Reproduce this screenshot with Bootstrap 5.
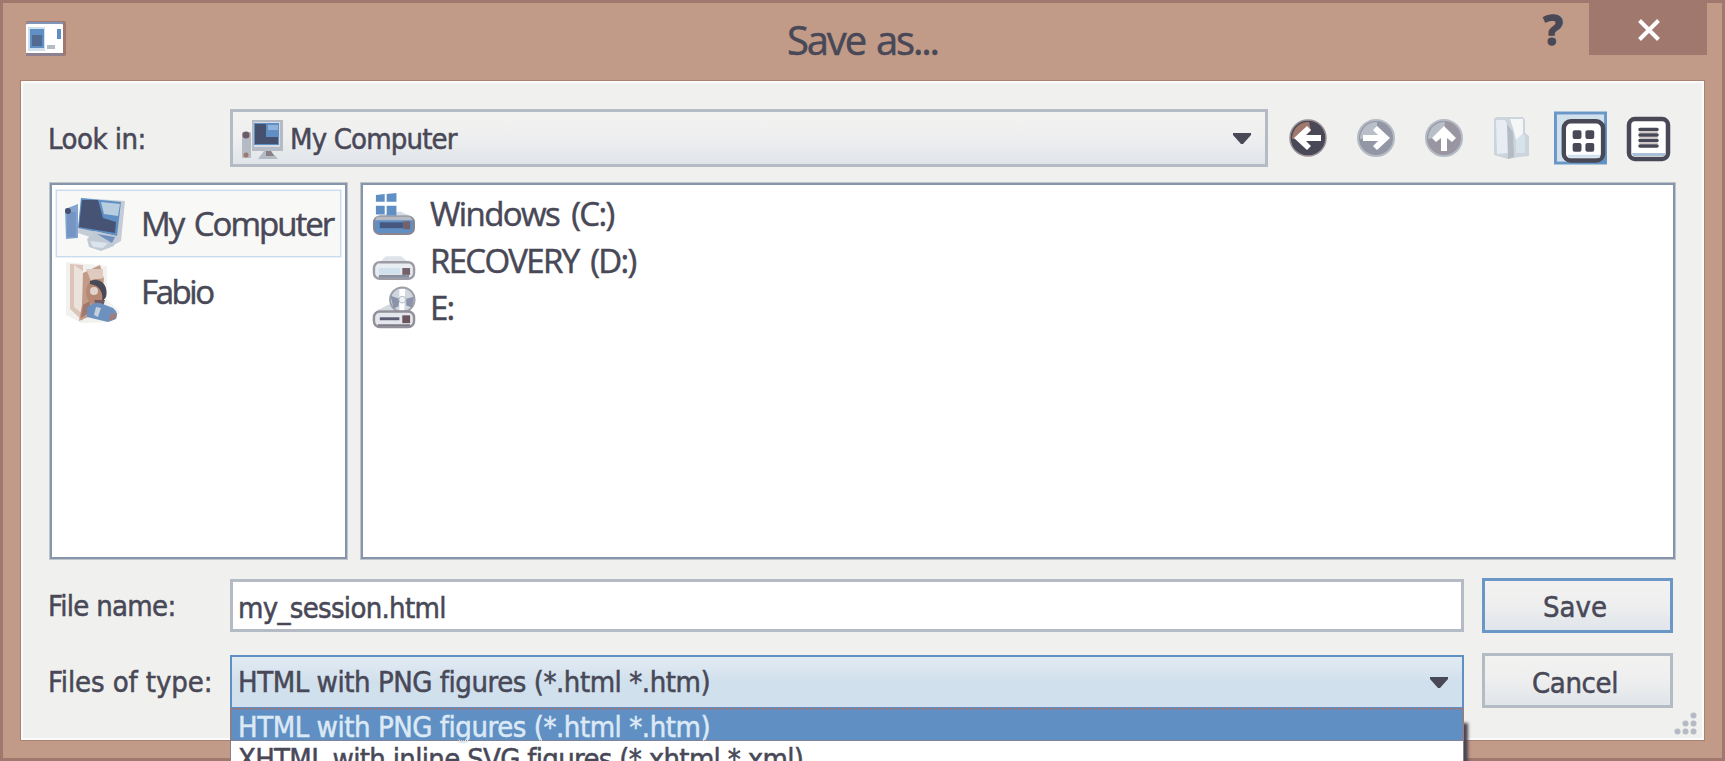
<!DOCTYPE html>
<html lang="en">
<head>
<meta charset="utf-8">
<title>Save as...</title>
<link href="https://cdn.jsdelivr.net/npm/bootstrap@5.3.0/dist/css/bootstrap.min.css" rel="stylesheet">
<style>
:root{--tan:#c19b87;--brown:#a0786d;--ink:#484857;--blue:#5f8fc3;--pale:#d1e0ed;--grey:#b4bbc4;--face:#f0f0ee}
html,body{height:100%;overflow:hidden}
body{font-family:"DejaVu Sans Condensed","DejaVu Sans",sans-serif;font-size:29px;line-height:1;color:var(--ink);-webkit-text-stroke:.5px currentColor}
.window{height:761px;background:var(--tan);border:3px solid var(--brown);padding:0 18px}
.titlebar{height:78px}
.app-icon{margin:17px 0 0 4px}
.window-title{font:40px/74px "Open Sans",sans-serif;letter-spacing:-2.2px;word-spacing:3px;text-align:center}
.help{font:700 41px/52px "Noto Sans",sans-serif;width:26px;text-align:center;margin-right:23px;-webkit-text-stroke:1.4px currentColor}
.close-btn{width:118px;height:52px;background:var(--brown);border:0;border-radius:0;padding:2px 0 0 1px;margin-right:-3px}
.panel{height:659px;background:var(--face);border:2px solid #fbfbfb;outline:1px solid #a98272;padding:26px 26px 0 26px}
.window-title,.tools,.lbl,.item{white-space:nowrap}
.lbl{width:182px;flex:none;margin-left:-1px;padding-top:2px}
.field{border:3px solid var(--grey);padding:0 5px;flex:none;white-space:nowrap}
.shade{background:linear-gradient(#f2f2f1,#efefef 45%,#e0e5ea)}
.look{width:1038px;height:58px}
.caret-svg{margin-right:8px}
.tools{margin-left:21px}
.tool{background:none;border:0;padding:0;display:flex}
.pane{height:376px;background:#fff;border:2px solid #8795aa;outline:1px solid #bfc4cb;outline-offset:0}
.places{width:297px;padding:5px 4px}
.files{width:1314px;padding:5px 8px}
.item{font-family:"Open Sans",sans-serif;font-size:33px}
.place{height:67px}
.place.current{background:#f8f8f7;border:1px solid #c9dced;outline:1px solid #eaf0f5}
.drive{height:47px}
.name-field{width:1234px;height:53px;background:#fff;border-width:3px}
.type-field{width:1234px;height:53px;background:linear-gradient(#e2ebf3,var(--pale) 50%);border:3px solid var(--blue);border-width:2px 2px 1px}
.push{width:191px;border:3px solid var(--grey);border-radius:0;font-size:29px;line-height:1;color:var(--ink);padding:3px 5px 0 0;-webkit-text-stroke:.5px currentColor}
.push.primary{border-color:#6b97c8}
.popup{left:0;top:53px;width:1234px;height:53px;overflow:hidden;background:#fff;border:1px solid #8b8088;border-top:0;border-bottom:0;box-shadow:5px 14px 3px -1px #4b4653;z-index:3}
.option{height:33px;padding:2px 7px 0;line-height:33px;white-space:nowrap}
.option.chosen{background:var(--blue);color:#dce9f5;outline:1px dotted #a0786d;outline-offset:-1px;border-top:2px dotted #96788a;line-height:31px}
.grip{right:5px;bottom:3px}
</style>
<script src="https://cdn.jsdelivr.net/npm/bootstrap@5.3.0/dist/js/bootstrap.bundle.min.js"></script>
</head>
<body>
<div class="window">
  <header class="titlebar position-relative d-flex align-items-start justify-content-between">
    <svg class="app-icon" width="42" height="38" viewBox="0 0 42 38">
      <rect x="1" y="1" width="40" height="35" rx="2" fill="#a0786d"/><rect x="2" y="2" width="36" height="2.500" fill="#7f96ba"/><rect x="1" y="4" width="37" height="30" rx="1" fill="#fff"/>
      <rect x="3" y="7" width="17" height="24" fill="#d1e0ed"/><rect x="5" y="9" width="14" height="19" fill="#5f8fc3"/><rect x="7" y="15" width="10" height="11" fill="#526b92"/>
      <rect x="32" y="9" width="4" height="10" fill="#5f8fc3"/><rect x="22" y="25" width="8" height="4" fill="#b4bbc4"/><path d="M1 33h37v3H1z" fill="#8d8090"/>
    </svg>
    <h1 class="window-title position-absolute start-0 end-0 m-0">Save as...</h1>
    <div class="d-flex">
      <span class="help">?</span>
      <button class="close-btn btn d-flex align-items-center justify-content-center" aria-label="Close">
        <svg width="24" height="24" viewBox="0 0 24 24"><path d="M2.500 2.500 21.500 21.500M21.500 2.500 2.500 21.500" stroke="#fff" stroke-width="4"/></svg>
      </button>
    </div>
  </header>

  <main class="panel position-relative">
    <div class="d-flex align-items-center">
      <span class="lbl" style="letter-spacing:-.5px">Look in:</span>
      <div class="field shade look d-flex align-items-center">
        <svg class="flex-shrink-0" width="46" height="42" viewBox="0 0 46 42" style="margin:2px 6px 0 0">
          <rect x="4" y="14" width="9" height="26" rx="1" fill="#b4bbc4"/><circle cx="8" cy="17" r="3.500" fill="#6d5c63"/><circle cx="8" cy="37" r="2.500" fill="#a0786d"/>
          <path d="M14 2h31v31H14z" fill="#b4bbc4"/><path d="M16 4h26v25H16z" fill="#d7dce2"/><path d="M16 5h25v22H16z" fill="#5f8fc3"/><path d="M17 6h11v13h12v7H17z" fill="#45516f"/><path d="M30 7h10v5H30z" fill="#8fb3dc"/>
          <path d="M26 33h7l7 8H20z" fill="#b4bbc4"/><path d="M28 33h5l3 5h-8z" fill="#8a7f86"/>
        </svg>
        <span style="letter-spacing:-.85px;padding-top:2px">My Computer</span>
        <svg class="caret-svg ms-auto" width="20" height="13" viewBox="0 0 20 13"><path d="M1 1h18v2l-8 9H9L1 3z" fill="#484857"/></svg>
      </div>
      <div class="tools d-flex align-items-center">
        <button class="tool" aria-label="Back"><svg width="38" height="40" viewBox="0 0 38 40"><circle cx="19" cy="20" r="18" fill="#484857" stroke="#9b8f96" stroke-width="1.500"/><path d="M3 21A16 17 0 0 1 20 4L22 13 13 20z" fill="#a0786d"/><path d="M5 20 18 8l4 4-5 5h15v6H17l5 5-4 4z" fill="#fff"/></svg></button>
        <button class="tool" style="margin-left:30px" aria-label="Forward"><svg width="38" height="40" viewBox="0 0 38 40"><circle cx="19" cy="20" r="18" fill="#9396a5" stroke="#b4bbc4" stroke-width="2"/><path d="M3 21A16 17 0 0 1 20 4L20 18z" fill="#b9bfc9"/><path d="M33 20 20 8l-4 4 5 5H6v6h15l-5 5 4 4z" fill="#fff"/></svg></button>
        <button class="tool" style="margin-left:30px" aria-label="Up"><svg width="38" height="40" viewBox="0 0 38 40"><circle cx="19" cy="20" r="18" fill="#9996a1" stroke="#b4bbc4" stroke-width="2"/><path d="M3 21A16 17 0 0 1 20 4L18 18z" fill="#b9bfc9"/><path d="M19 8 31 20l-4 4-5-4v13h-6V20l-5 4-4-4z" fill="#fff"/></svg></button>
        <button class="tool" style="margin-left:30px" aria-label="New folder"><svg width="37" height="44" viewBox="0 0 37 44"><path d="M1 3 3 1h27l2 3v13l4 3v20l-10 1-11 2L1 39z" fill="#ccd4dc"/><path d="M3 4h9l3 6v27L4 38z" fill="#e7edf2"/><path d="M17 3h13v15l-7 6-3-12z" fill="#f4f6f7"/><path d="M14 8l6 8 1 25-6 2z" fill="#b4bbc4"/><path d="M23 25l5-6h4v18h-9z" fill="#d7e2eb"/></svg></button>
        <button class="tool" style="margin-left:24px" aria-label="List view"><svg width="53" height="54" viewBox="0 0 54 54"><rect x="1.500" y="1.500" width="51" height="51" fill="#d1e0ed" stroke="#6b97c8" stroke-width="3"/><path d="M49 30v19H22v4h31V12h-4z" fill="#5f8fc3"/><rect x="10" y="10" width="40" height="40" rx="7" fill="#fff" stroke="#484857" stroke-width="4.500"/><path d="M14 44h33v3H15z" fill="#d1e0ed"/><g fill="#484857"><rect x="19" y="19" width="9" height="9" rx="2"/><rect x="32" y="19" width="9" height="9" rx="2"/><rect x="19" y="32" width="9" height="9" rx="2"/><rect x="32" y="32" width="9" height="9" rx="2"/></g></svg></button>
        <button class="tool" style="margin-left:19px;padding-top:2px" aria-label="Detail view"><svg width="45" height="46" viewBox="0 0 45 46"><rect x="3" y="3" width="39" height="40" rx="6" fill="#fff" stroke="#484857" stroke-width="4.500"/><path d="M6 37h33v3H7z" fill="#a9bfd8"/><path d="M14 13.500h17M14 19h17M14 24.500h17M14 30h17" stroke="#484857" stroke-width="3.500" stroke-linecap="round"/><path d="M13 16.250h19M13 21.750h19M13 27.250h19" stroke="#c4b4b0"/></svg></button>
      </div>
    </div>

    <div class="d-flex" style="margin:16px 0 0 1px;gap:14px">
      <div class="pane places">
        <div class="item place current d-flex align-items-center" style="letter-spacing:-2px;word-spacing:4px">
          <svg width="62" height="56" viewBox="0 0 62 56" style="margin:0 15px 0 7px">
            <path d="M1 13 14 8v34L2 43z" fill="#84a5cf"/><path d="M3 16h9v25H3z" fill="#7596c4"/><circle cx="4" cy="15" r="3" fill="#45516f"/>
            <path d="M17 2 61 5l-4 40-7 4-36-12z" fill="#c5ccd5"/><path d="M17 2 57 6l-4 34L14 32z" fill="#5f8fc3"/><path d="M18 4h16l5 18 13 4-1 11L15 31z" fill="#475374"/><path d="M37 6l19 2-2 12-14-2z" fill="#b9cde0"/>
            <path d="M23 43 31 35l21 5-2 10-13 5-12-4z" fill="#c1cad4"/><path d="M33 38l18 3-3 6z" fill="#6f8fbd"/><path d="M26 45l18 2-5 5-10-1z" fill="#d9e4ec"/>
          </svg><span>My Computer</span>
        </div>
        <div class="item place d-flex align-items-center" style="letter-spacing:-2.4px;padding-top:2px">
          <svg width="56" height="62" viewBox="0 0 56 62" style="margin:0 20px 0 9px">
            <path d="M1 1 42 5v34l13 12-8 10-31 1L1 54z" fill="#f1f1ef"/><path d="M5 3 18 4v56L5 48z" fill="#dcc5b8"/><path d="M9 4 18 10v43L9 46z" fill="#ece2dc"/><path d="M18 12 35 4l4 14-5 33-20 9 3-16z" fill="#c19b87"/><path d="M21 8 38 8v9l-12 3z" fill="#decabe"/>
            <path d="M18 44l7-4v11l-9 6z" fill="#a0786d"/><ellipse cx="31" cy="31" rx="10" ry="13" fill="#b68975"/><circle cx="29" cy="30" r="4" fill="#e3d4cb"/><path d="M25 20c10-4 19 4 16 16l-4 5c2-10-3-17-12-18z" fill="#484857"/><path d="M29 39h11l-2 7h-6z" fill="#725b61"/>
            <path d="M22 47Q28 41 35 42L48 47Q54 52 51 58L43 61 22 56z" fill="#6c91bf"/><path d="M31 46l5 1-3 9-4-2z" fill="#c4d0dc"/><path d="M45 53l7-1-2 6-6 2z" fill="#9e7f7d"/>
          </svg><span>Fabio</span>
        </div>
      </div>
      <div class="pane files">
        <div class="item drive d-flex align-items-center" style="letter-spacing:-1.6px;word-spacing:5px">
          <svg width="45" height="44" viewBox="0 0 46 45" style="margin-right:14px">
            <path d="M8 24 30 20l9 4 4 6H3z" fill="#d5dce3"/><rect x="3" y="25" width="41" height="18" rx="6" fill="#5f8fc3" stroke="#8b858f" stroke-width="2"/><path d="M6 25h34l3 4H4z" fill="#b4bbc4"/><path d="M9 31h24v6H9z" fill="#475880"/><rect x="33" y="30" width="7" height="8" fill="#75616a"/>
            <path d="M5 3l9-1v8H5zM16 2l10-1v9H16zM5 14h9v9H5zM16 14h10v10H16z" fill="#5f8fc3"/>
          </svg><span>Windows (C:)</span>
        </div>
        <div class="item drive d-flex align-items-center" style="letter-spacing:-1.7px;word-spacing:5px">
          <svg width="45" height="28" viewBox="0 0 46 28" style="margin:17px 14px 0 0">
            <path d="M10 6 15 1h16l6 5 4 5H5z" fill="#dde3e9"/><rect x="3" y="7" width="41" height="17" rx="6" fill="#e8edf1" stroke="#9d9ba4" stroke-width="2.500"/><path d="M8 20h31v3H8z" fill="#8790a1"/><path d="M8 13h22v6H8z" fill="#d1e0ed"/><rect x="32" y="13" width="8" height="7" fill="#75616a"/>
          </svg><span>RECOVERY (D:)</span>
        </div>
        <div class="item drive d-flex align-items-center" style="letter-spacing:-1.9px">
          <svg width="45" height="44" viewBox="0 0 46 45" style="margin-right:14px">
            <path d="M10 23 18 19h18l5 6H5z" fill="#d3dae0"/><circle cx="32" cy="14" r="12.500" fill="#cfd6de" stroke="#9d9fa8" stroke-width="2"/><path d="M20 10l9 3-1 8-5 2zM44 11l-8 2v7l6 2z" fill="#8b94ab"/><path d="M29 3h6l-1 22h-5z" fill="#fff"/><circle cx="32" cy="14" r="3.500" fill="#eef2f5" stroke="#b4bbc4"/>
            <rect x="3" y="26" width="41" height="16" rx="6" fill="#e4e8ec" stroke="#918f99" stroke-width="2.500"/><path d="M9 32h20v3H9z" fill="#5c5d72"/><path d="M7 39h33v2H7z" fill="#817b86"/><rect x="32" y="30" width="8" height="8" fill="#6b545b"/>
          </svg><span>E:</span>
        </div>
      </div>
    </div>

    <div class="d-flex align-items-center" style="margin-top:19px">
      <span class="lbl" style="letter-spacing:-.7px">File name:</span>
      <div class="field name-field d-flex align-items-center" style="letter-spacing:-.7px;padding-top:5px">my_session.html</div>
      <button class="push primary shade" style="height:55px;margin-left:18px">Save</button>
    </div>

    <div class="d-flex align-items-center" style="margin-top:20px">
      <span class="lbl" style="letter-spacing:-.1px;padding-top:4px">Files of type:</span>
      <div class="position-relative" style="margin-top:2px">
        <div class="field type-field d-flex align-items-center" style="letter-spacing:-.46px;padding-top:1px;padding-left:6px">HTML with PNG figures (*.html *.htm)
          <svg class="caret-svg ms-auto" width="20" height="13" viewBox="0 0 20 13"><path d="M1 1h18v2l-8 9H9L1 3z" fill="#484857"/></svg>
        </div>
        <div class="popup position-absolute">
          <div class="option chosen" style="letter-spacing:-.46px">HTML with PNG figures (*.html *.htm)</div>
          <div class="option" style="letter-spacing:-.69px">XHTML with inline SVG figures (*.xhtml *.xml)</div>
        </div>
      </div>
      <button class="push shade" style="height:55px;margin-left:18px;letter-spacing:-.4px;padding-top:5px">Cancel</button>
    </div>
    <svg class="grip position-absolute" width="23" height="23" viewBox="0 0 23 23" fill="#b4bbc4"><circle cx="19.500" cy="3.500" r="3"/><circle cx="11.500" cy="11.500" r="3"/><circle cx="19.500" cy="11.500" r="3"/><circle cx="3.500" cy="19.500" r="3"/><circle cx="11.500" cy="19.500" r="3"/><circle cx="19.500" cy="19.500" r="3"/></svg>
  </main>
</div>
</body>
</html>
